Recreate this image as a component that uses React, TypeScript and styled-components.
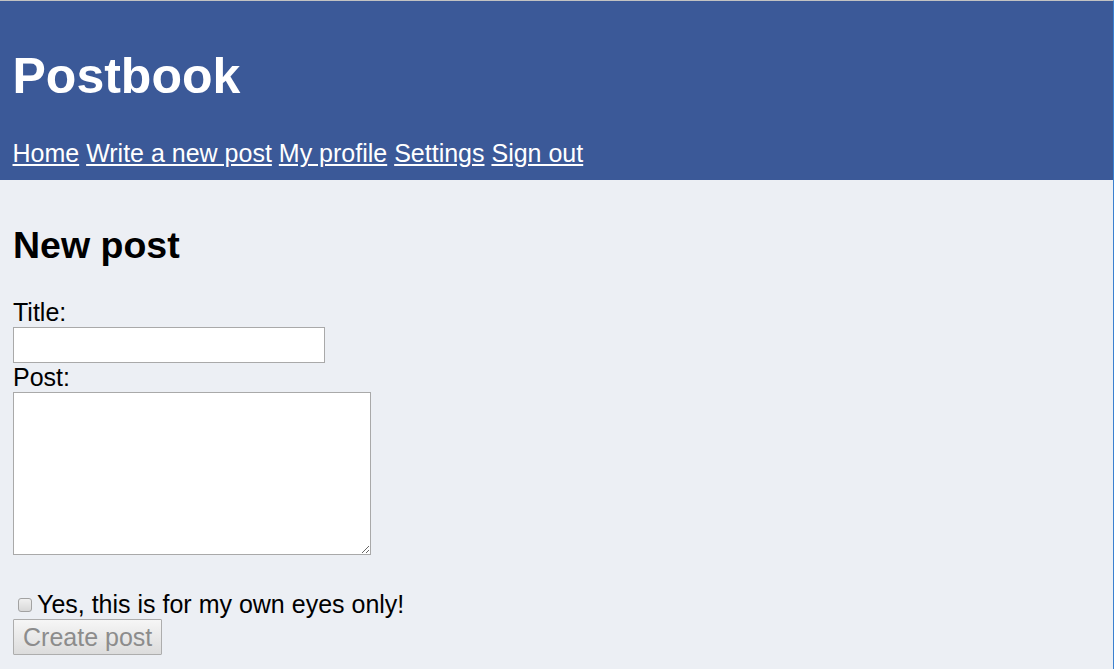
import React from "react";
import styled, { createGlobalStyle } from "styled-components";

const GlobalStyle = createGlobalStyle`
  html {
    background: #eceff4;
  }
  body {
    margin: 0;
    min-height: 100vh;
    box-sizing: border-box;
    border-top: 1px solid #c2c2c2;
    border-right: 1px solid #3a80cf;
    background: #eceff4;
    font-family: "Liberation Sans", Arial, sans-serif;
    color: #000;
  }
`;

const Header = styled.header`
  background: #3b5998;
  color: #fff;
  padding: 13.5px 12.5px 12px;
`;

const Brand = styled.h1`
  margin: 33.5px 0;
  font-size: 50px;
  line-height: 57.5px;
  font-weight: bold;
`;

const Nav = styled.nav`
  font-size: 25px;
  line-height: 28.75px;
  white-space: nowrap;
`;

const NavLink = styled.a`
  color: #fff;
  text-decoration: underline;
  cursor: pointer;
`;

const Main = styled.main`
  padding: 13px 13px;
`;

const Heading = styled.h2`
  margin: 31px 0;
  font-size: 37.5px;
  line-height: 43px;
  font-weight: bold;
`;

const Form = styled.form`
  display: flex;
  flex-direction: column;
  align-items: flex-start;
  font-size: 25px;
  line-height: 29px;
`;

const Label = styled.label`
  display: block;
`;

const TextInput = styled.input`
  box-sizing: border-box;
  width: 312px;
  height: 36px;
  margin: 0;
  border: 1px solid #a9a9a9;
  background: #fff;
  font: inherit;
`;

const TextArea = styled.textarea`
  box-sizing: border-box;
  width: 358px;
  height: 163px;
  margin: 0;
  border: 1px solid #a9a9a9;
  background: #fff;
  font: 16px "Liberation Mono", monospace;
`;

const CheckRow = styled.label`
  display: flex;
  align-items: center;
  margin-top: 35px;
  height: 29px;
`;

const Check = styled.input`
  appearance: none;
  box-sizing: border-box;
  width: 14px;
  height: 14px;
  margin: 2px 5px 0 5px;
  border: 1px solid #a2a2a2;
  border-radius: 3px;
  background: linear-gradient(#f0f0f0, #d8d8d8);
`;

const SubmitButton = styled.button`
  box-sizing: border-box;
  height: 36px;
  margin: 0;
  padding: 0 9px;
  border: 1px solid #adadad;
  border-radius: 1px;
  background: linear-gradient(#f6f6f6, #dcdcdc);
  color: #8c8c8c;
  font-family: "Liberation Sans", Arial, sans-serif;
  font-size: 25px;
  line-height: 28px;
`;

export default function App() {
  const links = ["Home", "Write a new post", "My profile", "Settings", "Sign out"];
  return (
    <>
      <GlobalStyle />
      <Header>
        <Brand>Postbook</Brand>
        <Nav>
          {links.map((l, i) => (
            <React.Fragment key={l}>
              {i > 0 ? " " : null}
              <NavLink href="#">{l}</NavLink>
            </React.Fragment>
          ))}
        </Nav>
      </Header>
      <Main>
        <Heading>New post</Heading>
        <Form onSubmit={(e) => e.preventDefault()}>
          <Label htmlFor="title">Title:</Label>
          <TextInput id="title" type="text" />
          <Label htmlFor="post">Post:</Label>
          <TextArea id="post" />
          <CheckRow>
            <Check type="checkbox" />
            Yes, this is for my own eyes only!
          </CheckRow>
          <SubmitButton type="submit" disabled>
            Create post
          </SubmitButton>
        </Form>
      </Main>
    </>
  );
}
